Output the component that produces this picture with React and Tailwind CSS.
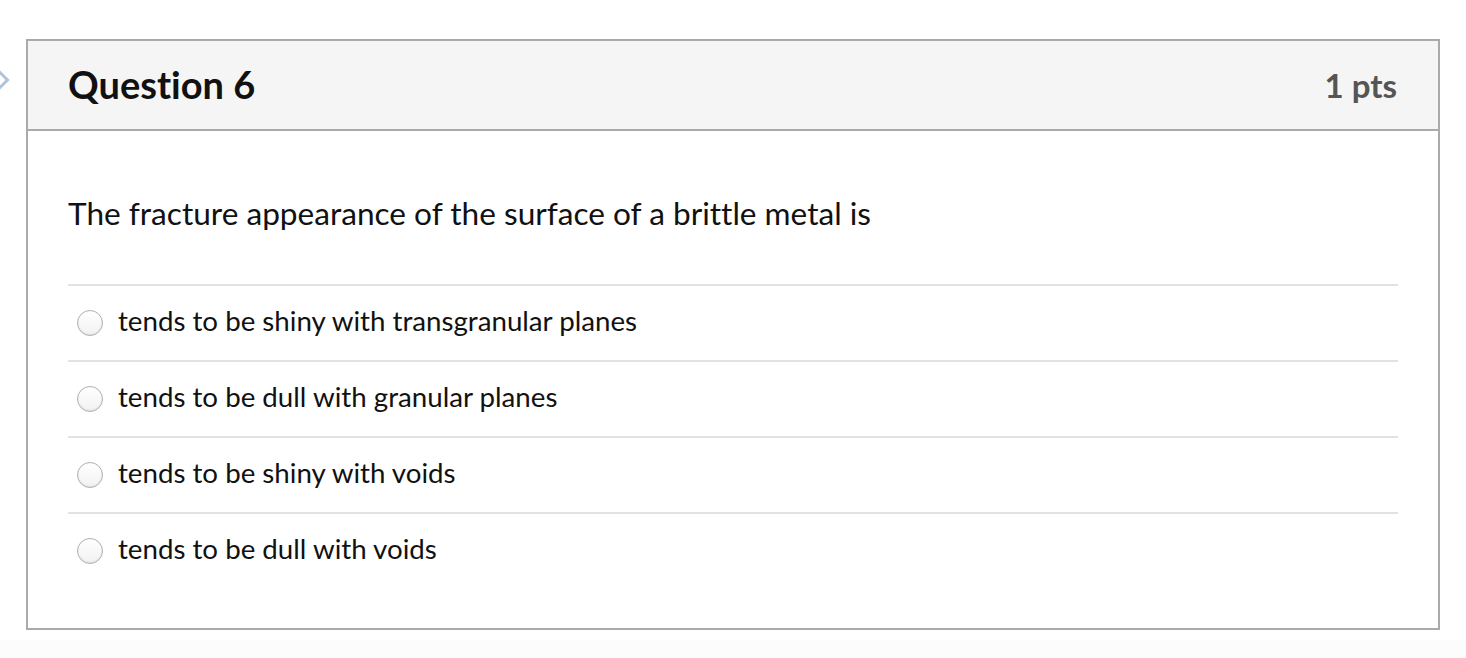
import React from "react";

const answers = [
  "tends to be shiny with transgranular planes",
  "tends to be dull with granular planes",
  "tends to be shiny with voids",
  "tends to be dull with voids",
];

export default function App() {
  return (
    <div
      className="relative w-[1466px] h-[658px] bg-white overflow-hidden [font-variant-ligatures:none]"
      style={{ fontFamily: "Lato, 'Open Sans', sans-serif" }}
    >
      <svg className="absolute left-0 top-[67px]" width="12" height="26" viewBox="0 0 12 26">
        <path d="M-4 1.5 L7.5 13 L-4 24.5" fill="none" stroke="#adc4d9" strokeWidth="3" />
      </svg>
      <div className="absolute left-0 right-0 top-[640px] bottom-0 bg-[#fcfcfc]" />
      <div className="relative ml-[26px] pt-[39px] w-[1414px]">
        <div className="border-2 border-[#aaaaaa] bg-white">
          <div className="h-[90px] bg-[#f5f5f5] border-b-2 border-[#aaaaaa] flex items-center justify-between px-[40px]">
            <div className="text-[38px] font-bold text-[#111] leading-none pb-[2px]">Question 6</div>
            <div className="text-[33px] font-bold text-[#555] leading-none pr-[1px]">1 pts</div>
          </div>
          <div className="px-[40px] pt-[64px] pb-[40px]">
            <div className="text-[31.6px] text-[#111] leading-[36px] pb-[53px]">
              The fracture appearance of the surface of a brittle metal is
            </div>
            <div>
              {answers.map((a, i) => (
                <div
                  key={i}
                  className="h-[76px] border-t-2 border-[#e2e2e2] flex items-center"
                >
                  <span className="ml-[9px] w-[26px] h-[26px] rounded-full border border-[#b0b0b0] bg-gradient-to-b from-white to-[#f2f2f2] shadow-[inset_0_-1px_2px_rgba(0,0,0,0.08)]" />
                  <span className="ml-[15px] text-[27.7px] text-[#111] leading-none pb-[4px]">{a}</span>
                </div>
              ))}
            </div>
          </div>
        </div>
      </div>
    </div>
  );
}
